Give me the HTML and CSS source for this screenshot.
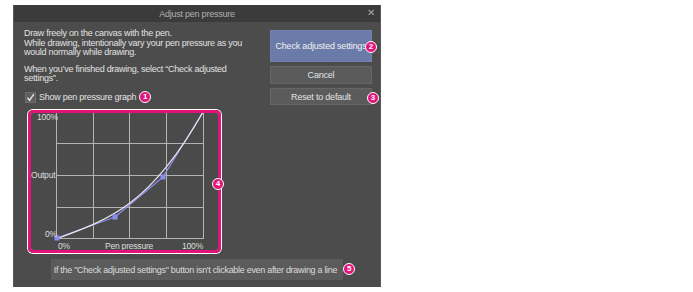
FILE: index.html
```html
<!DOCTYPE html>
<html>
<head>
<meta charset="utf-8">
<link rel="stylesheet" href="styles.css">
</head>
<body>
<div class="dialog">
  <div class="titlebar">
    <span class="title">Adjust pen pressure</span>
    <span class="close">✕</span>
  </div>
  <div class="content">
    <div class="left">
      <p class="msg">Draw freely on the canvas with the pen.<br>While drawing, intentionally vary your pen pressure as you<br>would normally while drawing.</p>
      <p class="msg msg2">When you’ve finished drawing, select “Check adjusted<br>settings”.</p>
      <div class="check-row">
        <span class="checkbox"><svg width="9" height="9" viewBox="0 0 9 9"><path d="M1.5 4.8 L3.6 7.3 L7.8 1.2" fill="none" stroke="#e8e8e8" stroke-width="1.4"/></svg></span>
        <span class="check-label">Show pen pressure graph</span>
        <span class="badge">1</span>
      </div>
      <div class="graph-frame">
        <svg class="graph" width="187" height="137" viewBox="0 0 187 137">
          <rect x="0" y="0" width="187" height="137" fill="#4a4a4a"/>
          <g stroke="#b4b4b4" stroke-width="1" fill="none">
            <line x1="25.5" y1="0" x2="25.5" y2="126"/>
            <line x1="62.5" y1="0" x2="62.5" y2="126"/>
            <line x1="98.5" y1="0" x2="98.5" y2="126"/>
            <line x1="135.5" y1="0" x2="135.5" y2="126"/>
            <line x1="172.5" y1="0" x2="172.5" y2="126"/>
            <line x1="25" y1="30.5" x2="173" y2="30.5"/>
            <line x1="25" y1="62.5" x2="173" y2="62.5"/>
            <line x1="25" y1="94.5" x2="173" y2="94.5"/>
            <line x1="25" y1="125.5" x2="173" y2="125.5"/>
          </g>
          <polyline points="26,125 84,104 132,64 172,-1" fill="none" stroke="#8c8cf0" stroke-width="1.2"/>
          <path d="M25,126 C80,106 120,91 172,-1" fill="none" stroke="#e6e6e6" stroke-width="1.2"/>
          <g fill="#8c8cf0">
            <rect x="23.5" y="122.5" width="5" height="5"/>
            <rect x="81.5" y="101.5" width="5" height="5"/>
            <rect x="129.5" y="61.5" width="5" height="5"/>
          </g>
          <g class="lbl">
            <text x="6" y="7">100%</text>
            <text x="0" y="65">Output</text>
            <text x="14" y="124">0%</text>
            <text x="27" y="136">0%</text>
            <text x="98" y="136" text-anchor="middle">Pen pressure</text>
            <text x="172" y="136" text-anchor="end">100%</text>
          </g>
        </svg>
        <span class="badge badge4">4</span>
      </div>
    </div>
    <div class="right">
      <div class="btn primary">Check adjusted settings<span class="badge badge-btn">2</span></div>
      <div class="btn cancel">Cancel</div>
      <div class="btn reset">Reset to default<span class="badge badge-btn badge3">3</span></div>
    </div>
  </div>
  <div class="note-row">
    <div class="note">If the "Check adjusted settings" button isn't clickable even after drawing a line<span class="badge badge5">5</span></div>
  </div>
</div>
</body>
</html>
```
FILE: styles.css
```css
html, body {
  margin: 0;
  padding: 0;
  background: #ffffff;
}
body {
  width: 693px;
  height: 292px;
  font-family: "Liberation Sans", Arial, sans-serif;
}
.dialog {
  margin: 5px 0 0 13px;
  width: 368px;
  height: 282px;
  background: #4c4c4c;
  box-sizing: border-box;
  border-left: 1px solid #5a5a5a;
  border-right: 1px solid #5a5a5a;
  display: flex;
  flex-direction: column;
}
.titlebar {
  height: 17px;
  background: #3b3b3b;
  display: flex;
  align-items: center;
  justify-content: center;
  position: relative;
  flex: none;
}
.title {
  color: #b0b0b0;
  font-size: 9px;
  letter-spacing: -0.25px;
}
.close {
  position: absolute;
  right: 5px;
  top: 2px;
  color: #a8a8a8;
  font-size: 10px;
}
.content {
  display: flex;
  padding: 0 8px 0 10px;
  height: 235px;
}
.left {
  flex: 1;
  display: flex;
  flex-direction: column;
}
.msg {
  margin: 7px 0 0 0;
  color: #e2e2e2;
  font-size: 9px;
  letter-spacing: -0.25px;
  line-height: 9.5px;
}
.msg2 {
  margin-top: 7px;
}
.check-row {
  margin-top: 8px;
  display: flex;
  align-items: center;
  height: 11px;
}
.checkbox {
  width: 9px;
  height: 9px;
  background: #5e5e5e;
  border: 1px solid #6e6e6e;
  margin-left: 1px;
  display: flex;
}
.check-label {
  margin-left: 3px;
  color: #e2e2e2;
  font-size: 9px;
  letter-spacing: -0.25px;
}
.badge {
  display: inline-flex;
  align-items: center;
  justify-content: center;
  width: 10px;
  height: 10px;
  border-radius: 50%;
  background: #e2147a;
  border: 1px solid #ffffff;
  color: #ffffff;
  font-size: 8px;
  font-weight: bold;
  letter-spacing: 0;
  line-height: 1;
  flex: none;
}
.check-row .badge {
  margin-left: 3px;
}
.graph-frame {
  position: relative;
  margin-top: 7px;
  margin-left: 4px;
  width: 187px;
  height: 137px;
  border: 3px solid #e2147a;
  border-radius: 5px;
  box-shadow: 0 0 0 1px #ffffff, inset 0 0 0 1px #ffffff;
}
.graph {
  display: block;
  border-radius: 2px;
}
.lbl text {
  fill: #dedede;
  font-family: "Liberation Sans", Arial, sans-serif;
  font-size: 8.5px;
  letter-spacing: -0.2px;
}
.badge4 {
  position: absolute;
  right: -6px;
  top: 65px;
}
.right {
  width: 102px;
  margin-top: 8px;
  display: flex;
  flex-direction: column;
  gap: 4px;
}
.btn {
  position: relative;
  box-sizing: border-box;
  background: #5b5b5b;
  border: 1px solid #666666;
  color: #e2e2e2;
  font-size: 9px;
  letter-spacing: -0.2px;
  white-space: nowrap;
  display: flex;
  align-items: center;
  justify-content: center;
}
.primary {
  height: 32px;
  background: #6a7aa9;
  border-color: #7382ad;
  color: #f0f0f0;
}
.cancel {
  height: 18px;
}
.reset {
  height: 17px;
}
.badge-btn {
  position: absolute;
  right: -6px;
  top: 10px;
}
.badge3 {
  top: 3px;
  right: -8px;
}
.note-row {
  display: flex;
  justify-content: center;
}
.note {
  position: relative;
  height: 21px;
  padding: 0 6px 0 3px;
  background: #5b5b5b;
  color: #dcdcdc;
  font-size: 9px;
  letter-spacing: -0.3px;
  display: flex;
  align-items: center;
  margin-top: 2px;
}
.badge5 {
  position: absolute;
  right: -12px;
  top: 4px;
}
```
